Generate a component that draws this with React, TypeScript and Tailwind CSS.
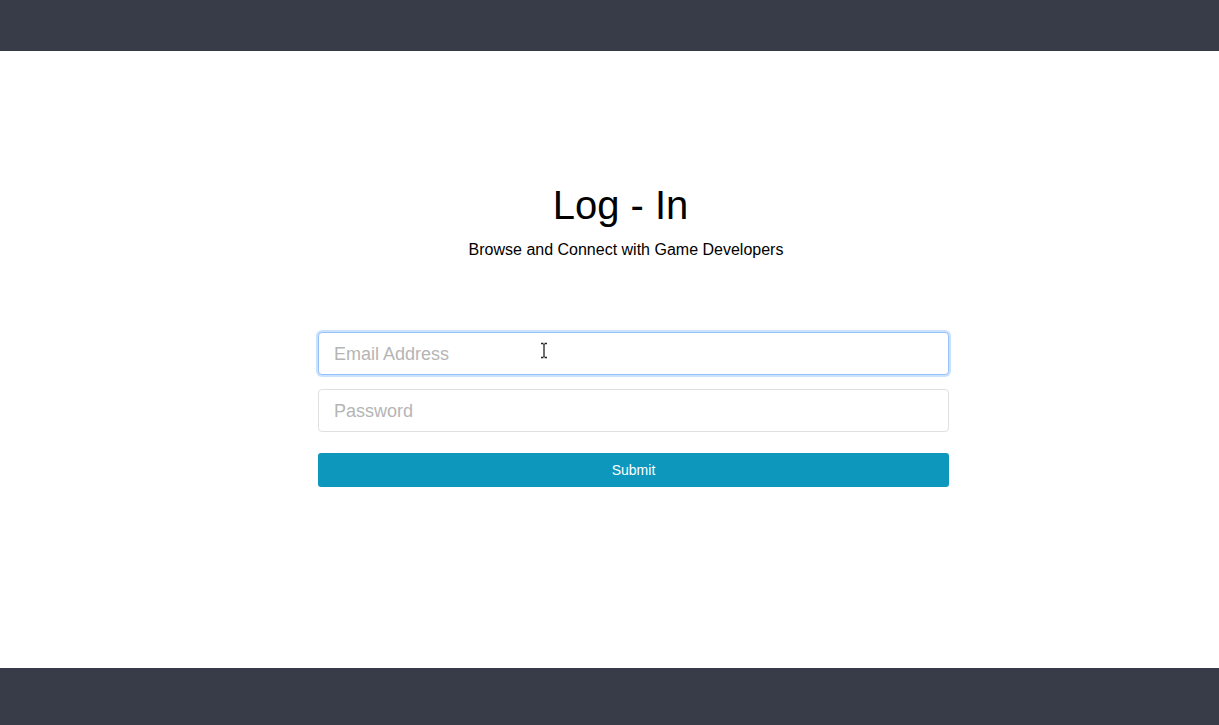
import React from "react";

export default function App() {
  return (
    <div className="flex flex-col h-[725px] w-full bg-white" style={{ fontFamily: '"Liberation Sans", Arial, sans-serif' }}>
      <header className="h-[51px] shrink-0 bg-[#383b48]" />
      <main className="flex-1 flex flex-col relative">
        <div className="flex justify-center mt-[134px]">
          <h1 className="ml-[22px] text-[40px] leading-none text-black font-normal">Log - In</h1>
        </div>
        <div className="flex justify-center mt-[17px]">
          <p className="ml-[33px] text-[16px] leading-none text-black">Browse and Connect with Game Developers</p>
        </div>
        <div className="flex justify-center mt-[74px]">
          <form className="ml-[48px] w-[631px] flex flex-col" onSubmit={(e) => e.preventDefault()}>
            <div className="relative">
              <input
                type="email"
                placeholder="Email Address"
                className="w-full h-[43px] rounded-[4px] border border-[#93c3f8] shadow-[0_0_0_2px_rgba(160,200,250,0.55)] pl-[15px] pr-[15px] pt-[2px] text-[18px] text-[#333] placeholder:text-[#b5b5b5] outline-none bg-white"
              />
              <svg className="absolute left-[221px] top-[10px]" width="10" height="17" viewBox="0 0 10 17">
                <path d="M2 1.5h2.5M5.5 1.5H8M5 2v13M2 15.5h2.5M5.5 15.5H8" stroke="#222" strokeWidth="1.3" fill="none" />
              </svg>
            </div>
            <input
              type="password"
              placeholder="Password"
              className="mt-[14px] w-full h-[43px] rounded-[4px] border border-[#e0e0e0] pl-[15px] pr-[15px] pt-[2px] text-[18px] text-[#333] placeholder:text-[#b5b5b5] outline-none bg-white"
            />
            <button
              type="submit"
              className="mt-[21px] w-full h-[34px] rounded-[3px] bg-[#0d97bc] text-white text-[14px] leading-none"
            >
              Submit
            </button>
          </form>
        </div>
      </main>
      <footer className="h-[57px] shrink-0 bg-[#383b48]" />
    </div>
  );
}
